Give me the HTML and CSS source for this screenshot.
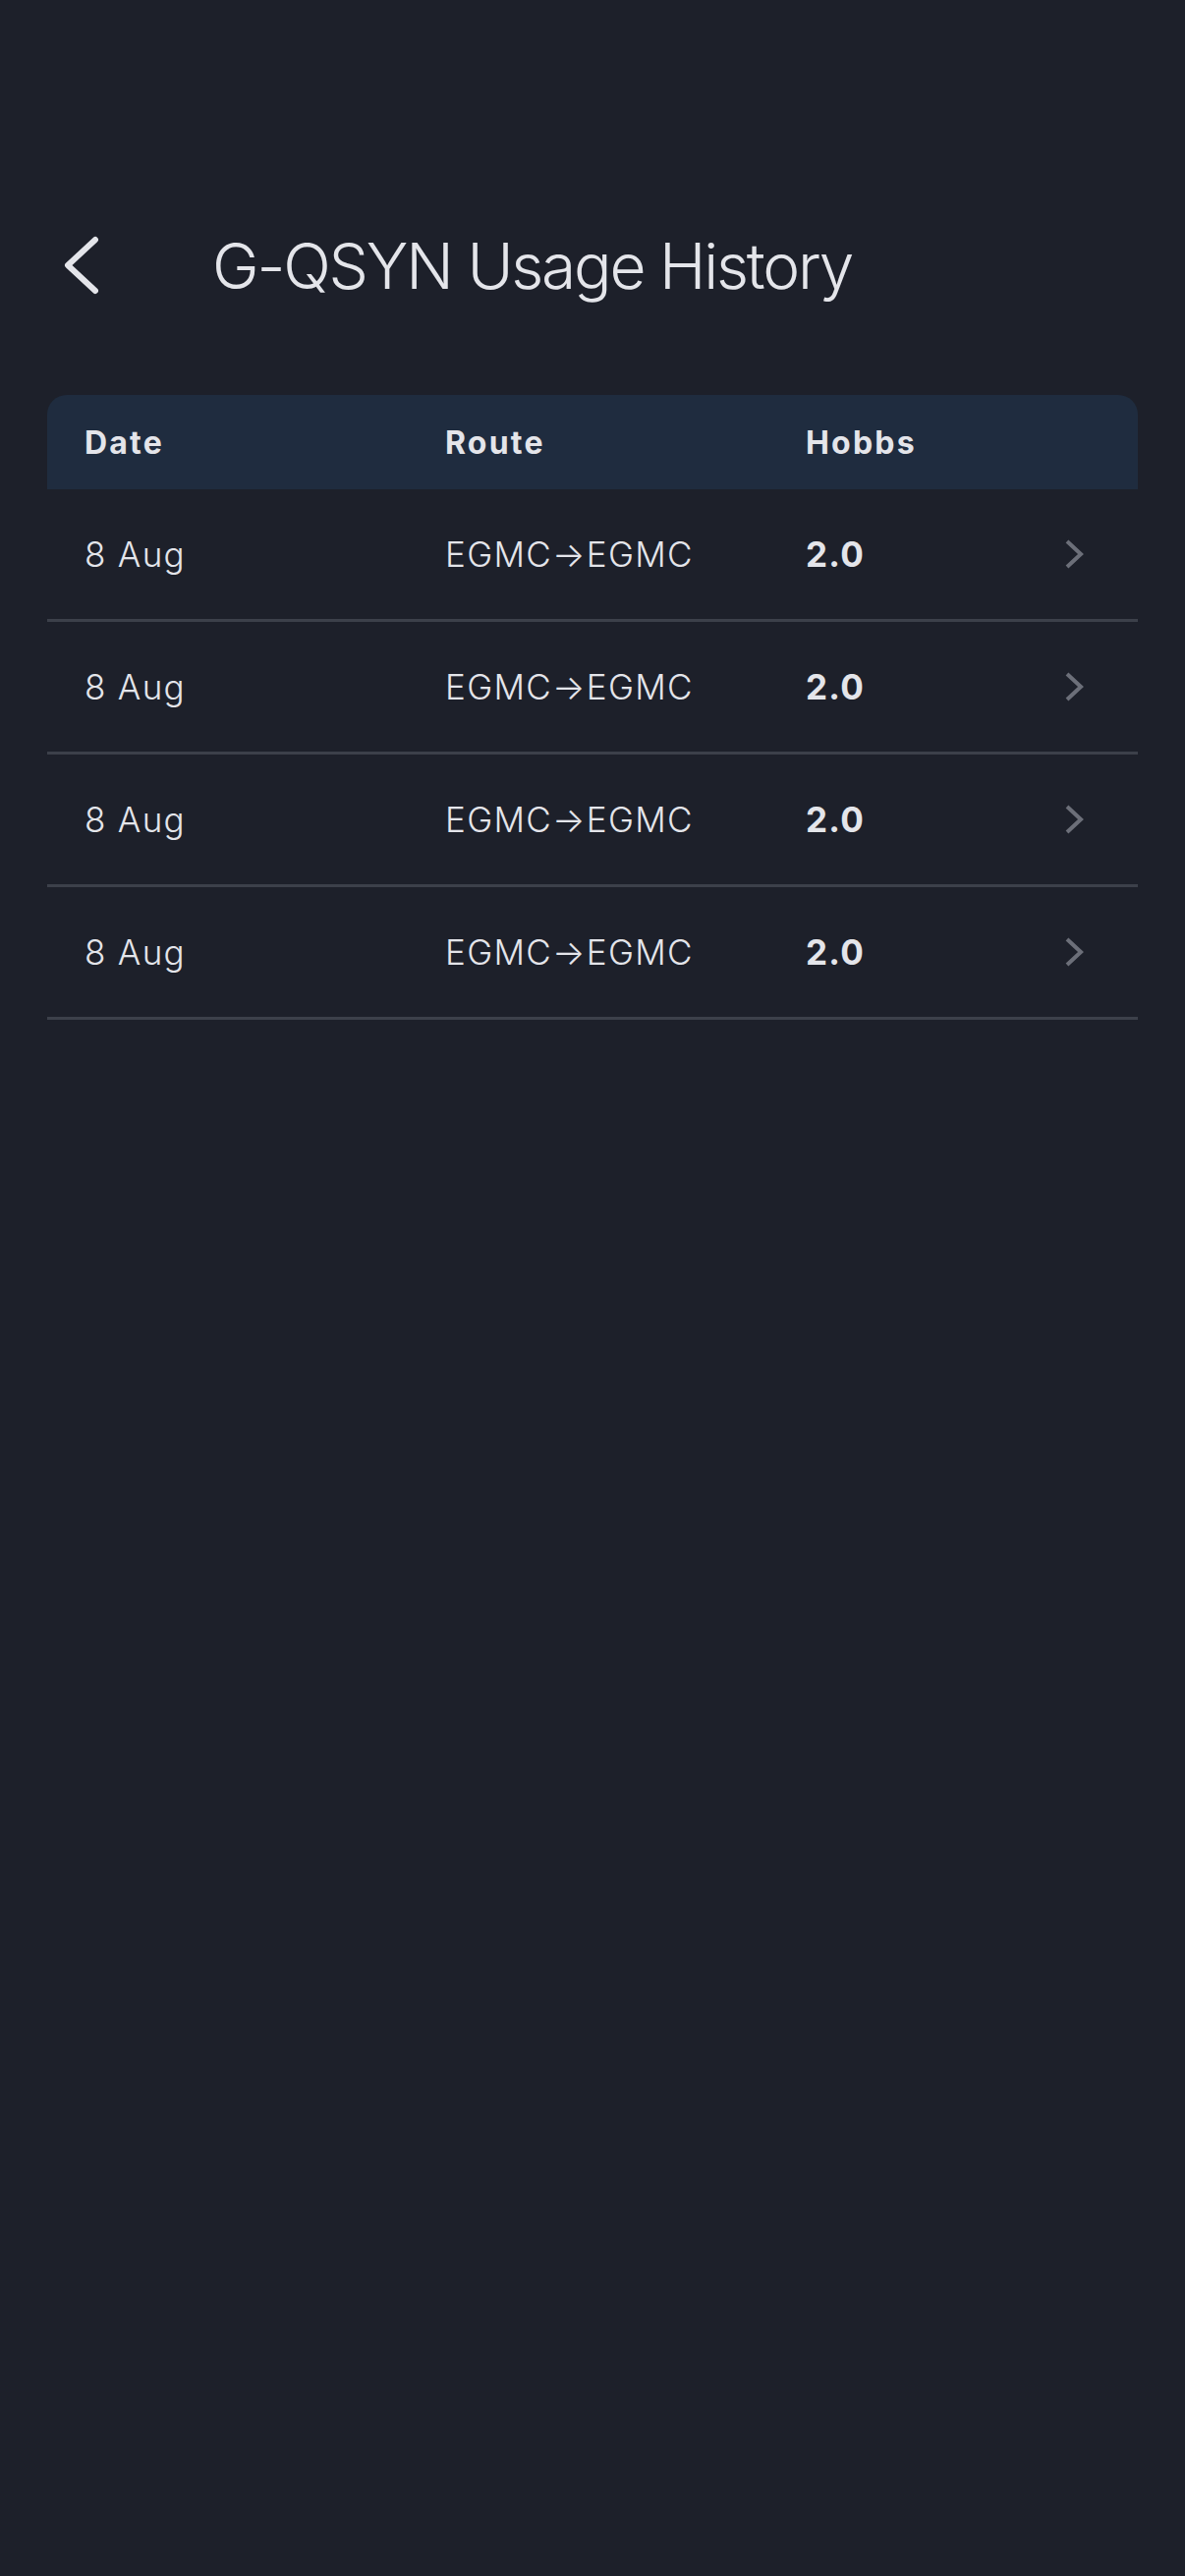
FILE: index.html
```html
<!DOCTYPE html>
<html lang="en">
  <head>
    <meta charset="UTF-8" />
    <meta name="viewport" content="width=device-width, initial-scale=1.0" />
    <title>G-QSYN Usage History</title>
    <link rel="stylesheet" href="styles.css">
  </head>
  <body>
    <div class="topbar">
      <a href="#" class="back" aria-label="Back">
        <svg width="40" height="60" viewBox="0 0 40 60">
          <polyline points="33,4 5,30 33,56" fill="none" stroke="#e4e5ea" stroke-width="6" stroke-linecap="round" stroke-linejoin="round" />
        </svg>
      </a>
      <h1>G-QSYN Usage History</h1>
    </div>

    <div class="wrap">
      <table id="usage-table">
        <colgroup>
          <col class="c-date" />
          <col class="c-route" />
          <col class="c-hobbs" />
          <col class="c-go" />
        </colgroup>
        <thead>
          <tr>
            <th>Date</th>
            <th>Route</th>
            <th>Hobbs</th>
            <th></th>
          </tr>
        </thead>
        <tbody></tbody>
      </table>
    </div>

    <script>
      const records = [
        { date: "8 Aug", from: "EGMC", to: "EGMC", hobbs: "2.0" },
        { date: "8 Aug", from: "EGMC", to: "EGMC", hobbs: "2.0" },
        { date: "8 Aug", from: "EGMC", to: "EGMC", hobbs: "2.0" },
        { date: "8 Aug", from: "EGMC", to: "EGMC", hobbs: "2.0" }
      ];

      function populateTable(data) {
        const tableBody = document.querySelector("#usage-table tbody");
        tableBody.innerHTML = "";

        data.forEach((record) => {
          const row = document.createElement("tr");
          row.innerHTML = `
            <td>${record.date}</td>
            <td>${record.from}→${record.to}</td>
            <td class="hobbs">${record.hobbs}</td>
            <td class="go">
              <svg width="20" height="30" viewBox="0 0 20 30">
                <polyline points="3,2 17,15 3,28" fill="none" stroke="#6c6f79" stroke-width="4" />
              </svg>
            </td>
          `;
          tableBody.appendChild(row);
        });
      }

      populateTable(records);
    </script>
  </body>
</html>
```

FILE: styles.css
```css
body {
  font-family: Inter, "Noto Sans", sans-serif;
  margin: 0;
  background-color: #1d202a;
  color: #e4e5ea;
  min-height: 2622px;
}

.topbar {
  display: flex;
  align-items: center;
  height: 112px;
  margin-top: 214px;
  padding-left: 64px;
}

.back {
  display: flex;
  width: 40px;
  height: 60px;
}

h1 {
  margin: 0 0 0 112px;
  font-size: 64px;
  font-weight: 350;
  letter-spacing: -2.2px;
}

.wrap {
  margin: 76px 48px 0;
}

table {
  width: 100%;
  table-layout: fixed;
  border-collapse: separate;
  border-spacing: 0;
}

.c-date,
.c-route {
  width: 367px;
}

.c-go {
  width: 75px;
}

th,
td {
  padding: 0 0 0 38px;
  text-align: left;
  white-space: nowrap;
}

th {
  height: 96px;
  background-color: #1f2c3f;
  font-size: 32px;
  font-weight: 700;
  letter-spacing: 2.2px;
}

th:first-child {
  border-top-left-radius: 20px;
}

th:last-child {
  border-top-right-radius: 20px;
}

td {
  height: 132px;
  border-bottom: 3px solid #3c404a;
  font-size: 35px;
  font-weight: 350;
  letter-spacing: 1.3px;
}

td.hobbs {
  font-weight: 700;
}

td.go {
  padding: 0;
}

td.go svg {
  display: block;
}
```
